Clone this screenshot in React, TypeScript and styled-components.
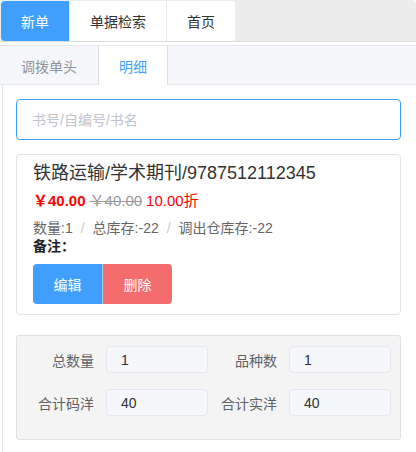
import React from "react";
import styled, { createGlobalStyle } from "styled-components";

const GlobalStyle = createGlobalStyle`
  body {
    margin: 0;
    background: #fff;
    font-family: "Liberation Sans", "Noto Sans CJK SC", sans-serif;
    font-size: 14px;
    color: #333;
  }
  * { box-sizing: border-box; }
`;

const topTabs = ["新单", "单据检索", "首页"];

const summary = [
  { label: "总数量", value: "1" },
  { label: "品种数", value: "1" },
  { label: "合计码洋", value: "40" },
  { label: "合计实洋", value: "40" },
];

const App: React.FunctionComponent<{}> = () => {
  return (
    <PageStyled>
      <GlobalStyle />
      <TopBarStyled>
        <TopTabGroup>
          {topTabs.map((t, i) => (
            <TopTab key={t} active={i === 0}>
              {t}
            </TopTab>
          ))}
        </TopTabGroup>
      </TopBarStyled>

      <SubTabsStyled>
        <SubTab>调拨单头</SubTab>
        <SubTab active>明细</SubTab>
      </SubTabsStyled>

      <PaneStyled>
        <SearchInput placeholder="书号/自编号/书名" />

        <CardStyled>
          <Title>铁路运输/学术期刊/9787512112345</Title>
          <PriceLine>
            <Price>￥40.00</Price>
            <OldPrice>￥40.00</OldPrice>
            <Discount>10.00折</Discount>
          </PriceLine>
          <Stats>
            数量:1<Sep>/</Sep>总库存:-22<Sep>/</Sep>调出仓库存:-22
          </Stats>
          <Remark>备注：</Remark>
          <ButtonGroup>
            <ActionButton kind="primary">编辑</ActionButton>
            <ActionButton kind="danger">删除</ActionButton>
          </ButtonGroup>
        </CardStyled>

        <SummaryStyled>
          {summary.map(s => (
            <React.Fragment key={s.label}>
              <SumLabel>{s.label}</SumLabel>
              <SumValue>{s.value}</SumValue>
            </React.Fragment>
          ))}
        </SummaryStyled>
      </PaneStyled>
    </PageStyled>
  );
};

const PageStyled = styled.div`
  width: 416px;
  height: 452px;
  overflow: hidden;
`;

const TopBarStyled = styled.div`
  height: 42px;
  padding: 1px 0 0 1px;
  background: #ececec;
  border-radius: 4px 4px 0 0;
  border-bottom: 1px solid #dcdcdc;
  margin-bottom: 3px;
`;

const TopTabGroup = styled.div`
  display: inline-flex;
  height: 40px;
  background: #fff;
  border-radius: 4px;
  overflow: hidden;
`;

const TopTab = styled.div<{ active?: boolean }>`
  display: flex;
  align-items: center;
  padding: 0 20px;
  border-right: 1px solid #e6e6e6;
  background: ${p => (p.active ? "#409eff" : "#fff")};
  color: ${p => (p.active ? "#fff" : "#333")};
  &:last-child {
    border-right: none;
  }
`;

const SubTabsStyled = styled.div`
  display: flex;
  height: 40px;
  background: #f5f7fa;
  border-top: 1px solid #e4e7ed;
  border-bottom: 1px solid #e4e7ed;
`;

const SubTab = styled.div<{ active?: boolean }>`
  display: flex;
  align-items: center;
  padding: 0 20px;
  margin-bottom: -1px;
  color: ${p => (p.active ? "#409eff" : "#909399")};
  background: ${p => (p.active ? "#fff" : "transparent")};
  border-left: 1px solid ${p => (p.active ? "#dcdfe6" : "transparent")};
  border-right: 1px solid ${p => (p.active ? "#dcdfe6" : "transparent")};
`;

const PaneStyled = styled.div`
  margin-left: 2px;
  border-left: 1px solid #e4e7ed;
  padding: 14px 15px 0 13px;
  height: 400px;
`;

const SearchInput = styled.input`
  display: block;
  width: 100%;
  height: 41px;
  padding: 0 15px;
  border: 1px solid #409eff;
  border-radius: 4px;
  outline: none;
  font-family: inherit;
  font-size: 14px;
  color: #333;
  &::placeholder {
    color: #c0c4cc;
  }
`;

const CardStyled = styled.div`
  margin-top: 14px;
  padding: 5px 16px 10px;
  border: 1px solid #e4e4e4;
  border-radius: 4px;
  height: 161px;
`;

const Title = styled.div`
  font-size: 18px;
  line-height: 26px;
  color: #333;
`;

const PriceLine = styled.div`
  margin-top: 5px;
  line-height: 20px;
  font-size: 15px;
  display: flex;
  gap: 4px;
`;

const Price = styled.span`
  color: #f00;
  font-weight: bold;
`;

const OldPrice = styled.span`
  color: #999;
  text-decoration: line-through;
`;

const Discount = styled.span`
  color: #f00;
`;

const Stats = styled.div`
  margin-top: 8px;
  line-height: 18px;
  color: #666;
`;

const Sep = styled.span`
  color: #ccc;
  margin: 0 8px;
`;

const Remark = styled.div`
  line-height: 18px;
  color: #222;
  font-weight: bold;
`;

const ButtonGroup = styled.div`
  display: flex;
  margin-top: 9px;
`;

const ActionButton = styled.button<{ kind: "primary" | "danger" }>`
  height: 40px;
  border: none;
  color: #fff;
  font-family: inherit;
  font-size: 14px;
  background: ${p => (p.kind === "primary" ? "#409eff" : "#f56c6c")};
  border-radius: ${p => (p.kind === "primary" ? "4px 0 0 4px" : "0 4px 4px 0")};
  border-left: ${p => (p.kind === "danger" ? "1px solid #a8c8ee" : "none")};
  width: ${p => (p.kind === "danger" ? "70px" : "69px")};
`;

const SummaryStyled = styled.div`
  margin-top: 20px;
  display: grid;
  grid-template-columns: 77px 102px 57px 102px;
  column-gap: 12px;
  row-gap: 16px;
  padding: 10px 10px 23px 0;
  background: #f4f4f4;
  border: 1px solid #e0e0e0;
  border-radius: 3px;
`;

const SumLabel = styled.div`
  display: flex;
  align-items: center;
  justify-content: flex-end;
  white-space: nowrap;
  color: #606266;
`;

const SumValue = styled.div`
  display: flex;
  align-items: center;
  height: 27px;
  padding-left: 14px;
  background: #f5f7fa;
  border: 1px solid #e4e7ed;
  border-radius: 4px;
  color: #333;
`;

export default App;
